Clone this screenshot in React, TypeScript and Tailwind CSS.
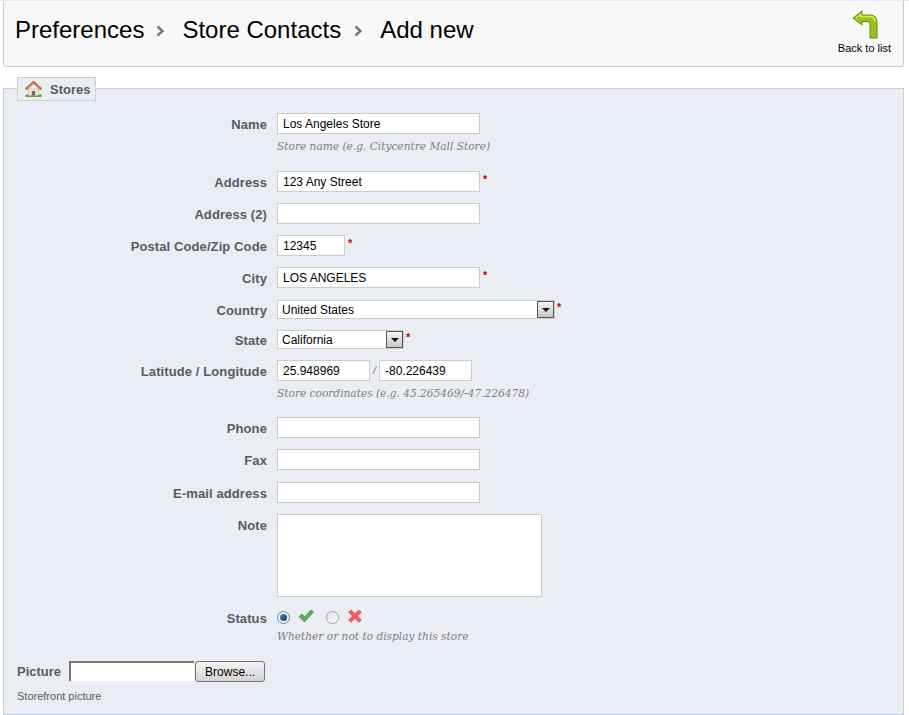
const sans = "font-['Liberation_Sans',Arial,sans-serif]";

function Chevron({ className }: { className: string }) {
  return (
    <svg width="9" height="12" viewBox="0 0 9 12" className={`mt-[2px] shrink-0 ${className}`}>
      <path d="M1.5 1.5 L6.5 6 L1.5 10.5" fill="none" stroke="#777" strokeWidth="2.4" />
    </svg>
  );
}

function BackIcon() {
  return (
    <svg width="28" height="30" viewBox="0 0 28 30">
      <path
        d="M1 8 L10 1 L10 5 L18 5 Q25 5 25 13 L25 28 L18 28 L18 14 Q18 11.5 15 11.5 L10 11.5 L10 15 Z"
        fill="#9cc414"
        stroke="#5f8a10"
        strokeWidth="1"
      />
      <path d="M4 8 L9 4.5 L9 6.5 L18 6.5 Q23 6.5 23.5 12" fill="none" stroke="#d3ea6b" strokeWidth="1.4" />
    </svg>
  );
}

function HouseIcon() {
  return (
    <svg width="17" height="16" viewBox="0 0 17 16">
      <path d="M0.5 13.5 H16.5 V16 H0.5 Z" fill="#58a83c" />
      <path d="M3.5 8 H13.5 V14.5 H3.5 Z" fill="#f3e9d3" stroke="#b9a98a" strokeWidth="0.6" />
      <path d="M6.8 10 H10.2 V14.5 H6.8 Z" fill="#6c6c6c" />
      <path d="M0.8 8.4 L8.5 1.4 L16.2 8.4" fill="none" stroke="#b8713a" strokeWidth="2.6" />
      <path d="M3 6.8 L8.5 2.2 L14 6.8" fill="none" stroke="#e3b27e" strokeWidth="0.9" />
    </svg>
  );
}

function Star({ className = "" }: { className?: string }) {
  return <span className={`mt-px self-start text-[11px] font-bold leading-[14px] text-[#c00] ${className}`}>*</span>;
}

function Field({
  label,
  value = "",
  width = "w-[203px]",
  required = false,
  className = "",
}: {
  label: string;
  value?: string;
  width?: string;
  required?: boolean;
  className?: string;
}) {
  return (
    <div className={`flex h-[21px] items-center ${className}`}>
      <Label>{label}</Label>
      <TextBox value={value} width={width} />
      {required && <Star className="ml-[3px]" />}
    </div>
  );
}

function Label({ children }: { children: string }) {
  return (
    <div className="mr-[10px] h-[21px] w-[263px] shrink-0 text-right text-[13px] font-bold leading-[23px] tracking-[0.1px] text-[#585a69]">
      {children}
    </div>
  );
}

function TextBox({ value, width }: { value: string; width: string }) {
  return (
    <div className={`h-[21px] ${width} shrink-0 overflow-hidden border border-[#cccccc] bg-white pl-[5px] text-[12px] leading-[20px] text-black`}>
      {value}
    </div>
  );
}

function Hint({ children, className = "" }: { children: string; className?: string }) {
  return (
    <div className={`ml-[273px] font-['DejaVu_Serif',serif] text-[10.6px] italic leading-[14px] text-[#7f7f7f] ${className}`}>
      {children}
    </div>
  );
}

function SelectBox({ value, width }: { value: string; width: string }) {
  return (
    <div className={`flex h-[19px] ${width} shrink-0 items-center justify-between border border-[#cccccc] bg-white pl-[4px] text-[12px] text-black`}>
      <span>{value}</span>
      <span className="flex h-[17px] w-[17px] items-center justify-center border border-[#555] bg-gradient-to-b from-[#f4f4f4] to-[#c8c8c8]">
        <svg width="8" height="4" viewBox="0 0 8 4">
          <path d="M0 0 H8 L4 4 Z" fill="#111" />
        </svg>
      </span>
    </div>
  );
}

export default function App() {
  return (
    <div className={`h-[715px] w-[909px] overflow-hidden bg-white ${sans}`}>
      <div className="h-px bg-[#dfeafa]" />
      <div className="mx-[3px] flex h-[66px] w-[901px] justify-between rounded-b-[3px] border border-t-0 border-[#cccccc] bg-[#f8f8f8]">
        <div className="flex h-[57px] items-center pl-[11px] text-[24px] leading-[28px] text-black">
          <span>Preferences</span>
          <Chevron className="ml-[12px] mr-[17px]" />
          <span>Store Contacts</span>
          <Chevron className="ml-[13px] mr-[17px]" />
          <span>Add new</span>
        </div>
        <div className="mr-[12px] flex flex-col items-center pt-[9px]">
          <div className="ml-[3px] h-[30px]">
            <BackIcon />
          </div>
          <div className="mt-[1px] text-[11px] leading-[14px] text-black">Back to list</div>
        </div>
      </div>

      <div className="mx-[3px] mt-[21px] h-[627px] w-[901px] border border-[#cccccc] border-b-[#b9c9da] bg-[#ebedf4]">
        <div className="-mt-[12px] ml-[13px] flex h-[24px] w-[79px] items-center border border-[#ccced7] bg-[#ebedf4] pl-[7px] text-[13px] font-bold leading-[24px] text-[#585a69]">
          <HouseIcon />
          <span className="ml-[8px] mt-[2px]">Stores</span>
        </div>

        <Field label="Name" value="Los Angeles Store" className="mt-[12px]" />
        <Hint className="mt-[5px]">Store name (e.g. Citycentre Mall Store)</Hint>
        <Field label="Address" value="123 Any Street" required className="mt-[18px]" />
        <Field label="Address (2)" className="mt-[11px]" />
        <Field label="Postal Code/Zip Code" value="12345" width="w-[68px]" required className="mt-[11px]" />
        <Field label="City" value="LOS ANGELES" required className="mt-[11px]" />

        <div className="mt-[11px] flex h-[21px] items-center">
          <Label>Country</Label>
          <SelectBox value="United States" width="w-[278px]" />
          <Star className="ml-[2px]" />
        </div>
        <div className="mt-[9px] flex h-[21px] items-center">
          <Label>State</Label>
          <SelectBox value="California" width="w-[127px]" />
          <Star className="ml-[2px]" />
        </div>
        <div className="mt-[10px] flex h-[21px] items-center">
          <Label>Latitude / Longitude</Label>
          <TextBox value="25.948969" width="w-[93px]" />
          <span className="mx-[3px] w-[3px] text-[11px] italic text-[#7f7f7f]">/</span>
          <TextBox value="-80.226439" width="w-[93px]" />
        </div>
        <Hint className="mt-[5px]">Store coordinates (e.g. 45.265469/-47.226478)</Hint>

        <Field label="Phone" className="mt-[17px]" />
        <Field label="Fax" className="mt-[11px]" />
        <Field label="E-mail address" className="mt-[12px]" />

        <div className="mt-[11px] flex items-start">
          <Label>Note</Label>
          <div className="h-[83px] w-[265px] border border-[#cccccc] bg-white" />
        </div>

        <div className="mt-[10px] flex h-[21px] items-center">
          <Label>Status</Label>
          <span className="flex h-[13px] w-[13px] items-center justify-center rounded-full border border-[#7b7f88] bg-[#f2f2f2]">
            <span className="h-[7px] w-[7px] rounded-full bg-gradient-to-br from-[#3d8fc4] to-[#0b3a66]" />
          </span>
          <svg width="16" height="14" viewBox="0 0 16 14" className="ml-[8px] -mt-[3px]">
            <path d="M1 7.5 L4 5 L6.5 8 L13 1 L15.5 3 L6.5 13 Z" fill="#58b04c" stroke="#3f8f3a" strokeWidth="0.7" />
          </svg>
          <span className="ml-[12px] h-[13px] w-[13px] rounded-full border border-[#a4a4a4] bg-gradient-to-br from-[#e4e4e4] to-[#fafafa]" />
          <svg width="14" height="14" viewBox="0 0 14 14" className="ml-[9px] -mt-[3px]">
            <path d="M3 1 L7 4.6 L11 1 L13.4 3.2 L9.5 7 L13.4 11 L11 13.2 L7 9.5 L3 13.2 L0.6 11 L4.5 7 L0.6 3.2 Z" fill="#f65a5c" stroke="#e34045" strokeWidth="0.6" />
          </svg>
        </div>
        <Hint className="mt-px">Whether or not to display this store</Hint>

        <div className="ml-[13px] mt-[18px] flex items-start">
          <span className="mr-[8px] h-[20px] text-[13px] font-bold leading-[22px] text-[#585a69]">Picture</span>
          <div className="h-[20px] w-[125px] border-2 border-b-0 border-r-0 border-[#767676] bg-white" />
          <div className="ml-px flex h-[21px] w-[70px] items-center justify-center rounded-[3px] border border-[#707070] bg-gradient-to-b from-[#f4f4f4] to-[#d4d4d4] pt-px text-[12px] text-black">
            Browse...
          </div>
        </div>
        <div className="ml-[13px] mt-[8px] text-[11px] leading-[12px] text-[#585a69]">Storefront picture</div>
      </div>
    </div>
  );
}
